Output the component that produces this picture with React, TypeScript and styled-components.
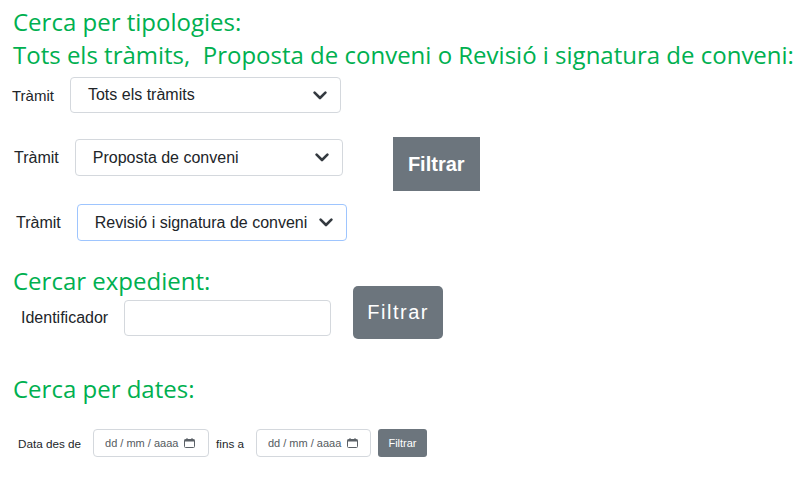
import React from "react";
import styled, { createGlobalStyle } from "styled-components";

const Global = createGlobalStyle`
  html, body { margin: 0; padding: 0; background: #ffffff; }
  body { font-family: "Liberation Sans", Arial, sans-serif; color: #212529; }
  * { box-sizing: border-box; }
`;

const Page = styled.div`
  display: flex;
  flex-direction: column;
  width: 800px;
  height: 482px;
  overflow: hidden;
`;

const Heading = styled.h2<{ $top: number }>`
  margin: ${(p) => p.$top}px 0 0 13px;
  font-family: "Open Sans", "Noto Sans", sans-serif;
  font-weight: 400;
  font-size: 24px;
  line-height: 33px;
  color: #00b050;
  white-space: pre;
`;

const Row = styled.div<{ $top: number; $left: number; $gap: number }>`
  display: flex;
  align-items: flex-start;
  margin: ${(p) => p.$top}px 0 0 ${(p) => p.$left}px;
  gap: ${(p) => p.$gap}px;
`;

const Field = styled.div<{ $gap: number; $offset?: number }>`
  display: flex;
  align-items: center;
  gap: ${(p) => p.$gap}px;
  margin-top: ${(p) => p.$offset ?? 0}px;
`;

const Label = styled.span<{ $size: number }>`
  font-size: ${(p) => p.$size}px;
  color: #212529;
  white-space: nowrap;
`;

const SelectBox = styled.div<{ $width: number; $height: number; $focused?: boolean }>`
  display: flex;
  align-items: center;
  justify-content: space-between;
  width: ${(p) => p.$width}px;
  height: ${(p) => p.$height}px;
  padding: 0 13px 0 17px;
  border: 1px solid ${(p) => (p.$focused ? "#9ec5fe" : "#d4d8dd")};
  border-radius: 4px;
  background: #fff;
  font-size: 16px;
  color: #212529;
`;

const TextInput = styled.div<{ $width: number; $height: number }>`
  width: ${(p) => p.$width}px;
  height: ${(p) => p.$height}px;
  border: 1px solid #d4d8dd;
  border-radius: 4px;
  background: #fff;
`;

const Button = styled.button<{
  $width: number;
  $height: number;
  $size: number;
  $bold?: boolean;
  $radius: number;
  $spacing?: number;
}>`
  display: flex;
  align-items: center;
  justify-content: center;
  width: ${(p) => p.$width}px;
  height: ${(p) => p.$height}px;
  padding: 0;
  border: none;
  border-radius: ${(p) => p.$radius}px;
  background: #6c757d;
  color: #ffffff;
  font-family: "Liberation Sans", Arial, sans-serif;
  font-size: ${(p) => p.$size}px;
  font-weight: ${(p) => (p.$bold ? 700 : 400)};
  letter-spacing: ${(p) => p.$spacing ?? 0}px;
  cursor: pointer;
`;

const DateBox = styled.div<{ $width: number }>`
  display: flex;
  align-items: center;
  gap: 6px;
  width: ${(p) => p.$width}px;
  height: 28px;
  padding: 0 0 0 11px;
  border: 1px solid #d4d8dd;
  border-radius: 4px;
  background: #fff;
  font-size: 11px;
  color: #555b61;
  white-space: pre;
`;

const Chevron = () => (
  <svg width="14" height="9" viewBox="0 0 14 9" fill="none">
    <path d="M1.6 1.6 L7 7 L12.4 1.6" stroke="#343a40" strokeWidth="2.6" strokeLinecap="round" strokeLinejoin="round" />
  </svg>
);

const CalendarIcon = () => (
  <svg width="11" height="10" viewBox="0 0 11 10" fill="none">
    <rect x="0.5" y="1.5" width="10" height="8" rx="1" stroke="#5b6167" strokeWidth="1" />
    <rect x="0.5" y="1.5" width="10" height="2" fill="#5b6167" />
    <rect x="2.5" y="0" width="1" height="2" fill="#5b6167" />
    <rect x="7.5" y="0" width="1" height="2" fill="#5b6167" />
  </svg>
);

const Select = ({ value, width, height, focused }: { value: string; width: number; height: number; focused?: boolean }) => (
  <SelectBox $width={width} $height={height} $focused={focused}>
    <span>{value}</span>
    <Chevron />
  </SelectBox>
);

const DateInput = ({ width }: { width: number }) => (
  <DateBox $width={width}>
    <span>{"dd / mm / aaaa"}</span>
    <CalendarIcon />
  </DateBox>
);

export default function App() {
  return (
    <Page>
      <Global />
      <Heading $top={5}>
        {"Cerca per tipologies:\nTots els tràmits,  Proposta de conveni o Revisió i signatura de conveni:"}
      </Heading>

      <Row $top={6} $left={12} $gap={0}>
        <Field $gap={16}>
          <Label $size={15}>Tràmit</Label>
          <Select value="Tots els tràmits" width={271} height={36} />
        </Field>
      </Row>

      <Row $top={24} $left={14} $gap={50}>
        <Field $gap={16} $offset={2}>
          <Label $size={16}>Tràmit</Label>
          <Select value="Proposta de conveni" width={268} height={37} />
        </Field>
        <Button $width={87} $height={54} $size={20} $bold $radius={0}>
          Filtrar
        </Button>
      </Row>

      <Row $top={13} $left={16} $gap={0}>
        <Field $gap={16}>
          <Label $size={16}>Tràmit</Label>
          <Select value="Revisió i signatura de conveni" width={270} height={37} focused />
        </Field>
      </Row>

      <Heading $top={23}>Cercar expedient:</Heading>

      <Row $top={-11} $left={21} $gap={22}>
        <Field $gap={16} $offset={14}>
          <Label $size={16}>Identificador</Label>
          <TextInput $width={207} $height={36} />
        </Field>
        <Button $width={90} $height={53} $size={20} $radius={5} $spacing={1.5}>
          Filtrar
        </Button>
      </Row>

      <Heading $top={33}>Cerca per dates:</Heading>

      <Row $top={24} $left={18} $gap={7}>
        <Field $gap={12}>
          <Label $size={11.7}>Data des de</Label>
          <DateInput width={116} />
        </Field>
        <Field $gap={12}>
          <Label $size={11.7}>fins a</Label>
          <DateInput width={115} />
        </Field>
        <Button $width={49} $height={28} $size={11} $radius={3}>
          Filtrar
        </Button>
      </Row>
    </Page>
  );
}
